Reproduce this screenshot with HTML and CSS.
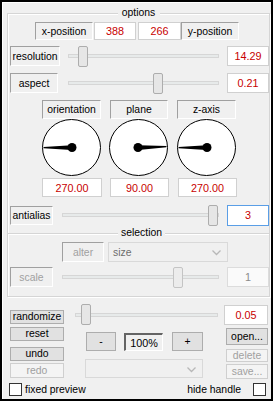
FILE: index.html
```html
<!DOCTYPE html>
<html>
<head>
<meta charset="utf-8">
<link rel="stylesheet" href="styles.css">
</head>
<body>
<div class="panel">
  <div class="group">
    <div class="gtitle">options</div>

    <div class="row r-pos">
      <div class="lbl w58">x-position</div>
      <div class="val w42 ml1">388</div>
      <div class="val w43 ml2">266</div>
      <div class="lbl w58">y-position</div>
    </div>

    <div class="row r-res">
      <div class="lbl w50 h20">resolution</div>
      <div class="slider s-res"><div class="track"></div><div class="thumb" style="left:10px"></div></div>
      <div class="val w42 h20 ml8">14.29</div>
    </div>

    <div class="row r-asp">
      <div class="lbl w48 h20">aspect</div>
      <div class="slider s-asp"><div class="track"></div><div class="thumb" style="left:85px"></div></div>
      <div class="val w42 h20 ml8">0.21</div>
    </div>

    <div class="row r-dlab">
      <div class="lbl w59">orientation</div>
      <div class="lbl w58 ml9">plane</div>
      <div class="lbl w59 ml9">z-axis</div>
    </div>

    <div class="row r-dials">
      <svg class="dial" width="61" height="58" viewBox="0 0 61 58">
        <ellipse cx="30.5" cy="28.5" rx="29" ry="28" fill="#fff" stroke="#000" stroke-width="1"/>
        <polygon points="2.5,28 2.5,29.3 30.5,31 30.5,26.3" fill="#000"/>
        <circle cx="31" cy="28.5" r="4.5" fill="#000"/>
      </svg>
      <svg class="dial d2" width="61" height="58" viewBox="0 0 61 58">
        <ellipse cx="30.5" cy="28.5" rx="29" ry="28" fill="#fff" stroke="#000" stroke-width="1"/>
        <polygon points="58.5,27 58.5,28.2 30.5,31 30.5,26.3" fill="#000"/>
        <circle cx="30" cy="28.5" r="4.5" fill="#000"/>
      </svg>
      <svg class="dial d3" width="61" height="58" viewBox="0 0 61 58">
        <ellipse cx="30.5" cy="28.5" rx="29" ry="28" fill="#fff" stroke="#000" stroke-width="1"/>
        <polygon points="2.5,28 2.5,29.3 30.5,31 30.5,26.3" fill="#000"/>
        <circle cx="31" cy="28.5" r="4.5" fill="#000"/>
      </svg>
    </div>

    <div class="row r-dval">
      <div class="val w60">270.00</div>
      <div class="val w59 ml8">90.00</div>
      <div class="val w59 ml9">270.00</div>
    </div>

    <div class="row r-aa">
      <div class="lbl w43 h19">antialias</div>
      <div class="slider s-aa"><div class="track"></div><div class="thumb" style="left:146px"></div></div>
      <div class="val focus w42 h21 ml8">3</div>
    </div>

    <div class="sep"><span class="sep-title">selection</span></div>

    <div class="row r-alter">
      <div class="lbl dis w42">alter</div>
      <div class="combo dis w120">
        <span class="ctext">size</span>
        <svg class="chev" width="9" height="6" viewBox="0 0 9 6"><polyline points="0.5,0.5 4.5,4.5 8.5,0.5" fill="none" stroke="#b8b8b8" stroke-width="1.3"/></svg>
      </div>
    </div>

    <div class="row r-scale">
      <div class="lbl dis w43 h20">scale</div>
      <div class="slider s-scale"><div class="track"></div><div class="thumb" style="left:111px"></div></div>
      <div class="val dis w42 h20 ml8">1</div>
    </div>
  </div>

  <div class="bottom">
    <div class="row r-rand">
      <div class="btn w54 h14">randomize</div>
      <div class="slider s-rand"><div class="track"></div><div class="thumb" style="left:6px"></div></div>
      <div class="val w44 h20 ml6">0.05</div>
    </div>

    <div class="cols">
      <div class="col-left">
        <div class="btn b-reset">reset</div>
        <div class="btn b-undo">undo</div>
        <div class="btn dis b-redo">redo</div>
      </div>
      <div class="col-mid">
        <div class="zoomrow">
          <div class="btn zbtn">-</div>
          <div class="zoomval">100%</div>
          <div class="btn zbtn zplus">+</div>
        </div>
        <div class="combo dis c-preset">
          <span class="ctext"></span>
          <svg class="chev" width="9" height="6" viewBox="0 0 9 6"><polyline points="0.5,0.5 4.5,4.5 8.5,0.5" fill="none" stroke="#b8b8b8" stroke-width="1.3"/></svg>
        </div>
      </div>
      <div class="col-right">
        <div class="btn b-open">open...</div>
        <div class="btn dis b-del">delete</div>
        <div class="btn dis b-save">save...</div>
      </div>
    </div>

    <div class="row r-checks">
      <label class="chk"><span class="box"></span><span>fixed preview</span></label>
      <label class="chk chk-right"><span>hide handle</span><span class="box"></span></label>
    </div>
  </div>
</div>
</body>
</html>
```

FILE: styles.css
```css
* { box-sizing: border-box; }
html, body { margin: 0; padding: 0; background: #fff; }
body {
  font-family: "Liberation Sans", Arial, sans-serif;
  font-size: 10.4px;
  color: #000;
}
.panel {
  width: 273px;
  height: 401px;
  border: 2px solid #000;
  background: #f0f0f0;
  box-shadow: inset 1px 1px 0 #fff;
  padding-top: 11px;
}
.group {
  position: relative;
  margin-left: 5px;
  width: 263px;
  height: 284px;
  border: 1px solid #d5d5d5;
  box-shadow: inset 1px 1px 0 #fff, 1px 1px 0 #fff;
}
.gtitle {
  position: absolute;
  top: -7px;
  left: 0;
  right: 0;
  margin: 0 auto;
  width: 42px;
  text-align: center;
  background: #f0f0f0;
  line-height: 12px;
}
.row { display: flex; align-items: center; }

.lbl, .val, .btn, .combo, .zoomval {
  display: flex;
  align-items: center;
  justify-content: center;
  white-space: nowrap;
  height: 18px;
}
.lbl {
  border: 1px solid;
  border-color: #a0a0a0 #fff #fff #a0a0a0;
}
.val {
  background: #fff;
  border: 1px solid #d0d0d0;
  color: #c80000;
  font-size: 10.8px;
}
.val.focus { border-color: #5a9ee6; }
.lbl.dis { color: #a0a0a0; }
.val.dis { color: #8a8a8a; background: #fafafa; border-color: #dcdcdc; }

.w42 { width: 42px; } .w43 { width: 43px; } .w44 { width: 44px; }
.w48 { width: 48px; } .w50 { width: 50px; } .w54 { width: 54px; }
.w58 { width: 58px; } .w59 { width: 59px; } .w60 { width: 60px; }
.w120 { width: 120px; }
.h14 { height: 14px; } .h19 { height: 19px; } .h20 { height: 20px; } .h21 { height: 21px; }
.ml1 { margin-left: 1px; } .ml2 { margin-left: 2px; } .ml6 { margin-left: 6px; }
.ml8 { margin-left: 8px; } .ml9 { margin-left: 9px; }

.r-pos { margin-top: 8px; height: 18px; padding-left: 27px; }
.r-res { margin-top: 6px; height: 20px; padding-left: 2px; }
.r-asp { margin-top: 7px; height: 20px; padding-left: 2px; }
.r-dlab { margin-top: 7px; height: 19px; padding-left: 34px; }
.r-dlab .lbl { height: 19px; }
.r-dials { height: 58px; padding-left: 33px; }
.dial { display: block; }
.d2 { margin-left: 6px; }
.d3 { margin-left: 7px; }
.r-dval { margin-top: 1px; height: 19px; padding-left: 34px; }
.r-dval .val { height: 19px; }
.r-aa { margin-top: 7px; height: 22px; padding-left: 2px; }

.slider { position: relative; height: 21px; display: flex; align-items: center; }
.track {
  width: 100%;
  height: 4px;
  background: #e7eaea;
  border: 1px solid #d6d6d6;
}
.thumb {
  position: absolute;
  top: 0;
  width: 10px;
  height: 21px;
  background: #e6e6e6;
  border: 1px solid #adadad;
  border-radius: 2px;
}
.s-res { margin-left: 8px; width: 151px; }
.s-asp { margin-left: 10px; width: 151px; }
.s-aa { margin-left: 9px; width: 157px; }
.s-scale { margin-left: 9px; width: 157px; }
.s-rand { margin-left: 11px; width: 143px; }

.sep {
  position: relative;
  margin-top: 7px;
  height: 2px;
  border-top: 1px solid #d5d5d5;
  border-bottom: 1px solid #fff;
}
.sep-title {
  position: absolute;
  top: -7px;
  left: 110px;
  padding: 0 3px;
  background: #f0f0f0;
  line-height: 12px;
}
.r-alter { margin-top: 7px; height: 20px; padding-left: 54px; }
.r-alter .lbl { height: 20px; }
.combo {
  position: relative;
  height: 20px;
  margin-left: 4px;
  border: 1px solid #d9d9d9;
  justify-content: flex-start;
  padding-left: 4px;
}
.combo.dis { background: #f0f0f0; color: #6d6d6d; }
.combo .chev { position: absolute; right: 6px; top: 7px; }
.r-scale { margin-top: 4px; height: 22px; padding-left: 2px; }
.r-scale .thumb { border-color: #c4c4c4; background: #ececec; }

.btn {
  background: #e1e1e1;
  border: 1px solid #adadad;
  height: 14px;
  line-height: 12px;
}
.btn.dis { background: #f4f4f4; border-color: #cfcfcf; color: #a0a0a0; }

.bottom { padding-left: 8px; }
.r-rand { margin-top: 7px; height: 21px; }
.r-rand .btn { margin-top: 5px; }

.cols { display: flex; margin-top: 2px; height: 52px; }
.col-left { width: 54px; display: flex; flex-direction: column; }
.b-reset { height: 14px; }
.b-undo { height: 14px; margin-top: 6px; }
.b-redo { height: 15px; margin-top: 2px; }
.col-mid { width: 118px; margin-left: 21px; display: flex; flex-direction: column; }
.zoomrow { display: flex; margin-top: 5px; height: 19px; }
.zbtn { width: 30px; height: 19px; margin-left: 1px; }
.zplus { width: 31px; margin-left: 9px; }
.zoomval {
  width: 39px;
  height: 18px;
  margin-left: 8px;
  margin-top: 1px;
  border: 1px solid;
  border-width: 2px 1px 1px 2px;
  border-color: #646464 #fff #fff #646464;
  background: #f0f0f0;
  font-size: 10.8px;
}
.c-preset { width: 118px; height: 19px; margin-left: 0; margin-top: 8px; }
.col-right { width: 42px; margin-left: 23px; display: flex; flex-direction: column; }
.b-open { height: 17px; margin-top: 1px; }
.b-del { height: 13px; margin-top: 4px; }
.b-save { height: 15px; margin-top: 2px; }

.r-checks { margin-top: 3px; height: 14px; padding-left: 0; justify-content: space-between; width: 256px; }
.chk { display: flex; align-items: center; gap: 3px; margin-left: -1px; }
.chk-right { gap: 12px; }
.box {
  display: block;
  width: 13px;
  height: 13px;
  background: #fff;
  border: 1px solid #333;
}
```
